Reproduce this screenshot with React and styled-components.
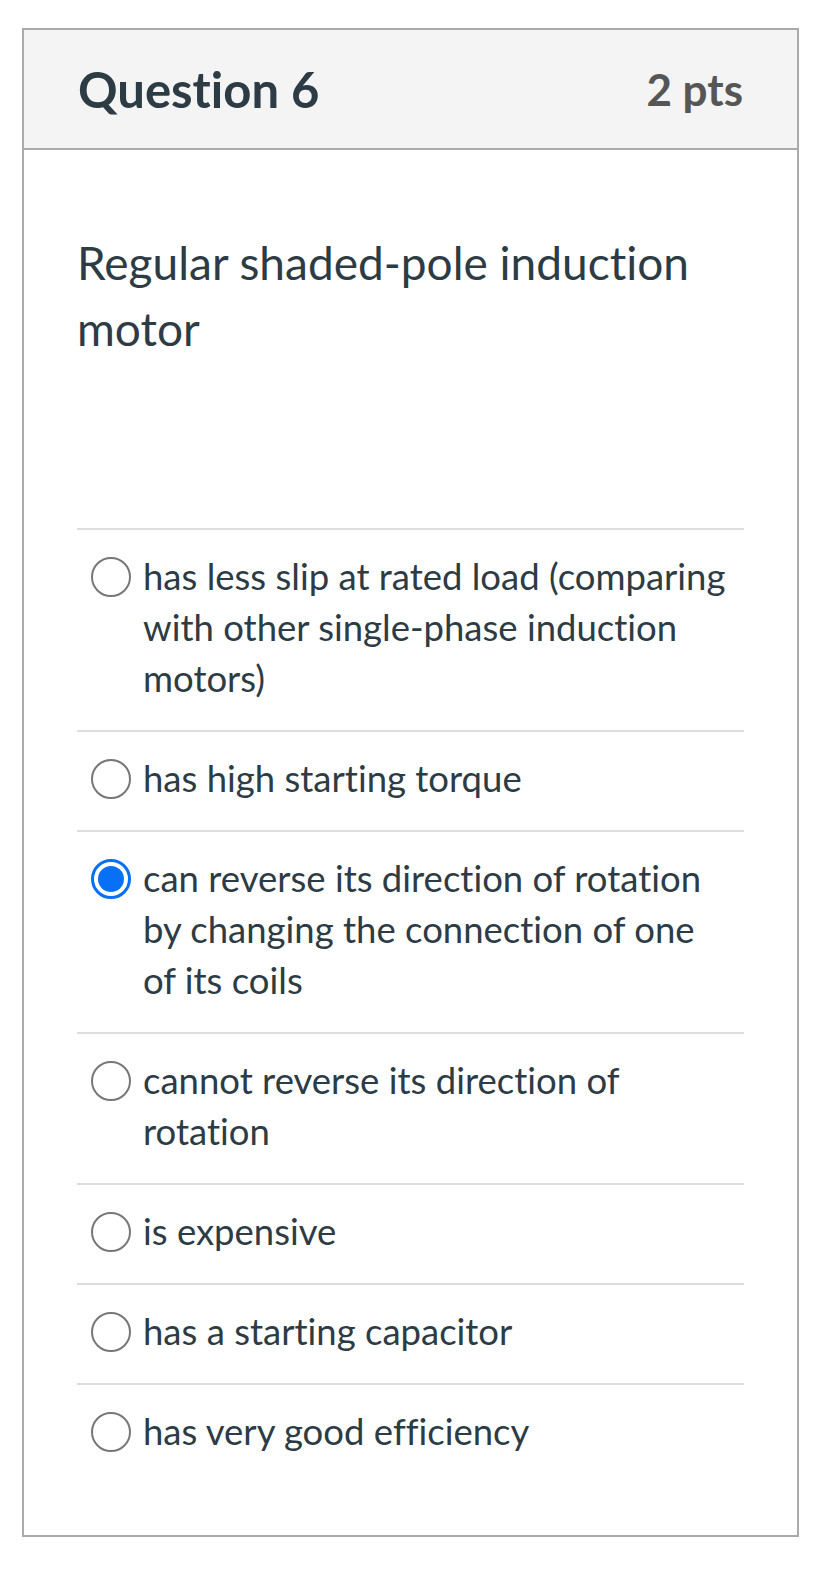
import React from "react";
import styled, { createGlobalStyle } from "styled-components";

const Global = createGlobalStyle`
  html, body { margin: 0; padding: 0; background: #fff; }
  body {
    font-family: Lato, "Liberation Sans", sans-serif;
    font-variant-ligatures: no-common-ligatures;
  }
`;

const Page = styled.div`
  padding: 28px 0 0 22px;
`;

const Card = styled.div`
  width: 777px;
  box-sizing: border-box;
  border: 2px solid #aaaaaa;
  background: #fff;
`;

const Header = styled.div`
  display: flex;
  justify-content: space-between;
  align-items: center;
  height: 118px;
  padding: 0 54px;
  background: #f4f4f4;
  border-bottom: 2px solid #aaaaaa;
`;

const Title = styled.h2`
  margin: 0;
  font-size: 49px;
  font-weight: 700;
  color: #2d3b45;
`;

const Points = styled.div`
  font-size: 44px;
  font-weight: 700;
  color: #565656;
`;

const Body = styled.div`
  padding: 80px 53px 52px 53px;
`;

const QuestionText = styled.p`
  margin: 0 0 166px 0;
  font-size: 46px;
  line-height: 66px;
  color: #2d3b45;
`;

const AnswerList = styled.div`
  display: flex;
  flex-direction: column;
`;

const Answer = styled.label`
  display: flex;
  align-items: flex-start;
  gap: 12px;
  padding: 21px 14px 26px 14px;
  border-top: 2px solid #dddddd;
  font-size: 36.5px;
  line-height: 51px;
  color: #2d3b45;
`;

const Radio = styled.span`
  flex: none;
  width: 40px;
  height: 40px;
  margin-top: 6px;
  box-sizing: border-box;
  border-radius: 50%;
  border: ${(p) => (p.$checked ? "3px solid #0770f7" : "2px solid #777777")};
  display: flex;
  align-items: center;
  justify-content: center;
  &::after {
    content: "";
    display: ${(p) => (p.$checked ? "block" : "none")};
    width: 26px;
    height: 26px;
    border-radius: 50%;
    background: #0770f7;
  }
`;

const answers = [
  "has less slip at rated load (comparing with other single-phase induction motors)",
  "has high starting torque",
  "can reverse its direction of rotation by changing the connection of one of its coils",
  "cannot reverse its direction of rotation",
  "is expensive",
  "has a starting capacitor",
  "has very good efficiency",
];

export default function App() {
  return (
    <Page>
      <Global />
      <Card>
        <Header>
          <Title>Question 6</Title>
          <Points>2 pts</Points>
        </Header>
        <Body>
          <QuestionText>Regular shaded-pole induction motor</QuestionText>
          <AnswerList>
            {answers.map((a, i) => (
              <Answer key={i}>
                <Radio $checked={i === 2} />
                <span>{a}</span>
              </Answer>
            ))}
          </AnswerList>
        </Body>
      </Card>
    </Page>
  );
}
